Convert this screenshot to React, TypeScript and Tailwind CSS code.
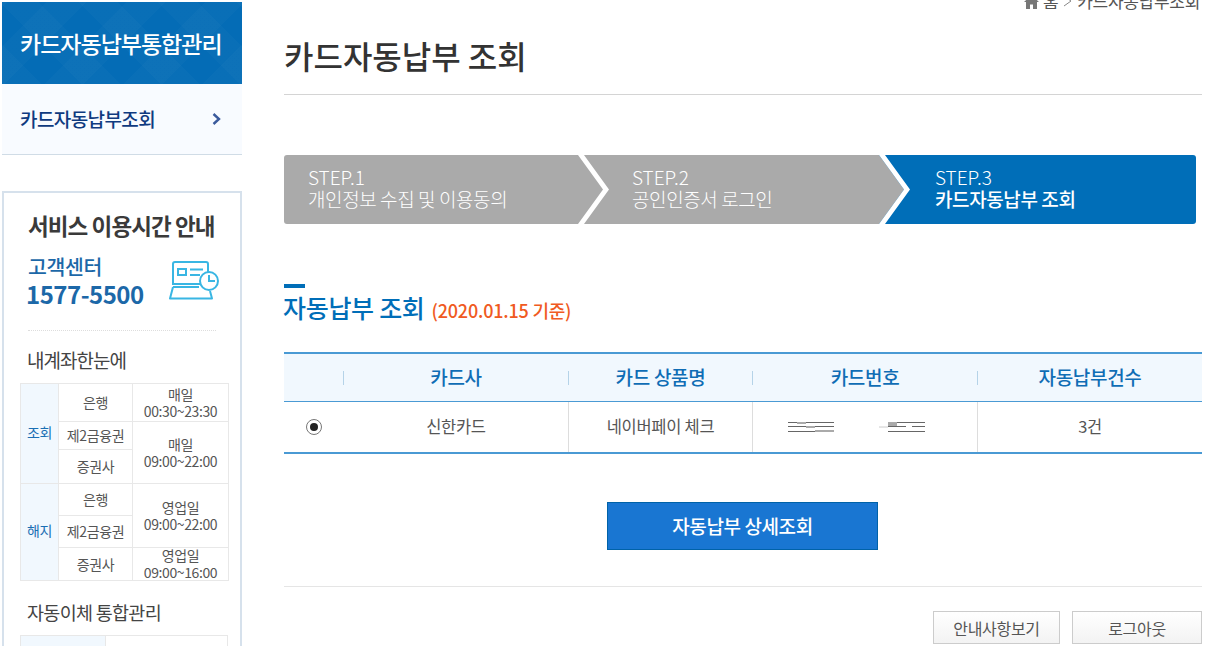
const STEPS = [
  { label: 'STEP.1', title: '개인정보 수집 및 이용동의', width: 'w-[294px]', pad: 'pl-[24px]' },
  { label: 'STEP.2', title: '공인인증서 로그인', width: 'w-[301px]', pad: 'pl-[54px]' },
]

const COLUMNS = [
  { label: '', width: 'w-[60px]' },
  { label: '카드사', width: 'w-[225px]' },
  { label: '카드 상품명', width: 'w-[184px]' },
  { label: '카드번호', width: 'w-[225px]' },
  { label: '자동납부건수', width: 'w-[224px]' },
]

// Sits on the seam between two steps: left colour arrow head, then the white stroke.
function Chevron() {
  return (
    <svg viewBox="0 0 32 69" className="absolute right-[-32px] top-0 z-10 h-[69px] w-[32px]">
      <path d="M0 0L25 34.5L0 69Z" fill="#aaaaaa" />
      <path d="M0 0L25 34.5L0 69H6L31 34.5L6 0Z" fill="#fff" />
    </svg>
  )
}

// Scribble left over from the redacted card number.
function RedactedDigits({ wide }: { wide?: boolean }) {
  return (
    <svg viewBox="0 0 46 14" className="h-[14px] w-[46px]">
      {wide ? (
        <>
          <path d="M0 2.5H46M0 6.5H46M0 11.5H46" stroke="#666" strokeWidth="1" />
          <path d="M9 1H18V4H9ZM18 5H27V8H18ZM27 10H46V13H27Z" fill="#fff" />
          <path d="M9 2H18V4H9ZM18 6H27V8H18ZM27 10H46V12H27Z" fill="#aaa" />
        </>
      ) : (
        <>
          <path d="M9 2.5H46M9 11.5H46M9 6.5H27M33 6.5H46" stroke="#666" strokeWidth="1" />
          <path d="M0 7H9" stroke="#ccc" strokeWidth="1" />
          <path d="M9 2H18V6H9Z" fill="#aaa" />
        </>
      )}
    </svg>
  )
}

function Sidebar() {
  const cell = 'border border-[#e8e8e8] text-center text-[14px] leading-[17px] text-[#555] tracking-[-0.4px]'
  const head = 'border border-[#e8e8e8] bg-[#f1f8fe] pb-[3px] text-center text-[14px] tracking-[-0.4px] text-[#1a6fb4]'
  return (
    <aside className="ml-[2px] mt-[2px] w-[240px] shrink-0">
      <div className="flex h-[82px] items-center bg-[#046cb6] bg-[repeating-linear-gradient(45deg,#ffffff05_0_28px,transparent_28px_56px),repeating-linear-gradient(-45deg,#ffffff05_0_28px,transparent_28px_56px)] pl-[18px] text-[23px] font-medium tracking-[-1px] text-white">
        카드자동납부통합관리
      </div>
      <div className="flex h-[71px] items-center justify-between border-b border-[#d0dce6] bg-[#f8fbff] pl-[18px] pr-[21px] text-[19px] font-medium tracking-[-0.6px] text-[#0f3a80]">
        카드자동납부조회
        <svg viewBox="0 0 9 12" className="h-[12px] w-[9px]">
          <path d="M1.5 1L7 6L1.5 11" fill="none" stroke="#3a5a9c" strokeWidth="2.4" />
        </svg>
      </div>

      <div className="mt-[36px] h-[500px] border-2 border-[#d6e1ec] px-[16px] pt-[16px]">
        <h3 className="pl-[8px] text-[22.5px] font-bold leading-[32px] tracking-[-0.9px] text-[#3a3a3a]">
          서비스 이용시간 안내
        </h3>
        <div className="mx-[8px] mt-[13px] flex items-center justify-between border-b border-dotted border-[#ddd] pb-[21px]">
          <div className="text-[#1c68a8]">
            <p className="text-[20.5px] font-medium leading-[25px] tracking-[-0.4px]">고객센터</p>
            <p className="-ml-[2px] text-[24px] font-bold leading-[30px] tracking-[-0.5px]">1577-5500</p>
          </div>
          <svg viewBox="0 0 50 44" fill="none" stroke="#39b6e3" strokeWidth="2" className="-mr-[3px] h-[44px] w-[50px]">
            <path d="M31 24H4V4a2 2 0 0 1 2-2h31a2 2 0 0 1 2 2v8" />
            <path d="M9 9h8v6h-8zM21 9.5h13M21 15h10" />
            <path d="M4 27h26M4 27L1 38.5H43L41 31" strokeLinejoin="round" />
            <circle cx="40" cy="21" r="9" />
            <path d="M40 15v6h6" />
          </svg>
        </div>

        <p className="mt-[15px] pl-[7px] text-[19px] leading-[28px] tracking-[-1px] text-[#444]">내계좌한눈에</p>
        <table className="mt-[9px] w-[208px] table-fixed border-collapse">
          <colgroup>
            <col className="w-[38px]" />
            <col className="w-[74px]" />
            <col className="w-[96px]" />
          </colgroup>
          <tbody>
            <tr className="h-[38px]">
              <td rowSpan={3} className={head}>조회</td>
              <td className={cell}>은행</td>
              <td className={cell}>매일<br />00:30~23:30</td>
            </tr>
            <tr className="h-[28px]">
              <td className={cell}>제2금융권</td>
              <td rowSpan={2} className={cell}>매일<br />09:00~22:00</td>
            </tr>
            <tr className="h-[34px]">
              <td className={cell}>증권사</td>
            </tr>
            <tr className="h-[32px]">
              <td rowSpan={3} className={head}>해지</td>
              <td className={cell}>은행</td>
              <td rowSpan={2} className={cell}>영업일<br />09:00~22:00</td>
            </tr>
            <tr className="h-[32px]">
              <td className={cell}>제2금융권</td>
            </tr>
            <tr className="h-[33px]">
              <td className={cell}>증권사</td>
              <td className={cell}>
                <div className="flex h-[32px] flex-col justify-center">
                  <span>영업일</span>
                  <span>09:00~16:00</span>
                </div>
              </td>
            </tr>
          </tbody>
        </table>

        <p className="mt-[17px] pl-[7px] text-[18.5px] leading-[28px] tracking-[-0.7px] text-[#444]">자동이체 통합관리</p>
        <div className="mt-[9px] flex h-[40px] w-[208px] border border-[#e8e8e8]">
          <div className="w-[85px] border-r border-[#e8e8e8] bg-[#f1f8fe]" />
        </div>
      </div>
    </aside>
  )
}

export default function App() {
  return (
    <div className="flex h-[646px] w-[1208px] overflow-hidden bg-white font-['Noto_Sans_CJK_KR','Noto_Sans',sans-serif]">
      <Sidebar />

      <main className="ml-[42px] w-[918px] shrink-0">
        <header className="h-[103px] border-b border-[#d4d4d4]">
          <div className="-mt-[8px] flex h-[18px] items-center justify-end gap-[4px] pr-[2px] text-[17px] tracking-[-0.3px] text-[#555]">
            <svg viewBox="0 0 15 15" className="h-[15px] w-[15px]">
              <path d="M7.5 1L15 8H13V15H9V10.5H6V15H2V8H0Z" fill="#777" />
            </svg>
            <span>홈</span>
            <svg viewBox="0 0 9 12" className="mx-[1px] h-[12px] w-[9px]">
              <path d="M1 1L8 6L1 11" fill="none" stroke="#888" />
            </svg>
            <span>카드자동납부조회</span>
          </div>
          <h1 className="mt-[23px] text-[32px] font-medium leading-[44px] text-[#333]">카드자동납부 조회</h1>
        </header>

        <div className="mt-[60px] flex h-[69px] w-[912px]">
          {STEPS.map((step, i) => (
            <div
              key={step.label}
              className={`relative flex ${step.width} flex-col justify-center bg-[#aaaaaa] pb-[4px] ${step.pad} ${i === 0 ? 'rounded-l-[3px]' : ''} text-[19px] font-light leading-[22px] text-white`}
            >
              <span>{step.label}</span>
              <span className="tracking-[-0.4px]">{step.title}</span>
              <Chevron />
            </div>
          ))}
          <div className="flex flex-1 flex-col justify-center rounded-r-[3px] bg-[#006eb8] pb-[4px] pl-[56px] text-[19px] leading-[22px] text-white">
            <span className="font-light">STEP.3</span>
            <span className="font-medium tracking-[-0.4px]">카드자동납부 조회</span>
          </div>
        </div>

        <div className="mt-[60px] h-[4px] w-[21px] bg-[#006eb8]" />
        <div className="mt-[1px] flex items-baseline gap-[7px]">
          <h2 className="-ml-[1px] text-[25px] font-medium leading-[36px] tracking-[-0.3px] text-[#006eb8]">자동납부 조회</h2>
          <span className="text-[18px] font-medium tracking-[-0.2px] text-[#f05a22]">(2020.01.15 기준)</span>
        </div>

        <div className="mt-[27px] border-y-2 border-b-[#4a9ad4] border-t-[#4a9ad4]">
          <div className="flex h-[48px] items-center border-b-[1.5px] border-[#4a9ad4] bg-[#f1f8fe]">
            {COLUMNS.map((col, i) => (
              <div
                key={col.label || 'radio'}
                className={`flex h-[14px] ${col.width} items-center justify-center ${i < COLUMNS.length - 1 ? 'border-r border-[#b5d3e8]' : ''} text-[19px] font-medium tracking-[-0.3px] text-[#0f6db5]`}
              >
                {col.label}
              </div>
            ))}
          </div>
          <div className="flex h-[50px] items-stretch text-[16.5px] tracking-[-0.3px] text-[#555]">
            <div className="flex w-[60px] items-center pl-[22px]">
              <span className="flex size-[16px] items-center justify-center rounded-full border border-[#777]">
                <span className="size-[8px] rounded-full bg-[#222]" />
              </span>
            </div>
            <div className="flex w-[225px] items-center justify-center border-r border-[#ddd] pb-[2px]">신한카드</div>
            <div className="flex w-[184px] items-center justify-center border-r border-[#ddd] pb-[2px]">네이버페이 체크</div>
            <div className="flex w-[225px] items-center justify-center gap-[45px] border-r border-[#ddd] pr-[18px]">
              <RedactedDigits wide />
              <RedactedDigits />
            </div>
            <div className="flex w-[224px] items-center justify-center pb-[2px]">3건</div>
          </div>
        </div>

        <div className="mt-[48px] flex justify-center pr-[1px]">
          <button
            type="button"
            className="h-[48px] w-[271px] border border-[#0062a8] bg-[#1976d2] text-[19px] font-medium tracking-[-0.4px] text-white"
          >
            자동납부 상세조회
          </button>
        </div>

        <div className="mt-[36px] flex justify-end gap-[12px] border-t border-[#e5e5e5] pt-[24px]">
          <button
            type="button"
            className="h-[33px] w-[127px] border border-[#ccc] bg-gradient-to-b from-white to-[#f3f3f3] text-[16px] tracking-[-0.3px] text-[#555]"
          >
            안내사항보기
          </button>
          <button
            type="button"
            className="h-[33px] w-[130px] border border-[#ccc] bg-gradient-to-b from-white to-[#f3f3f3] text-[16px] tracking-[-0.3px] text-[#555]"
          >
            로그아웃
          </button>
        </div>
      </main>
    </div>
  )
}
